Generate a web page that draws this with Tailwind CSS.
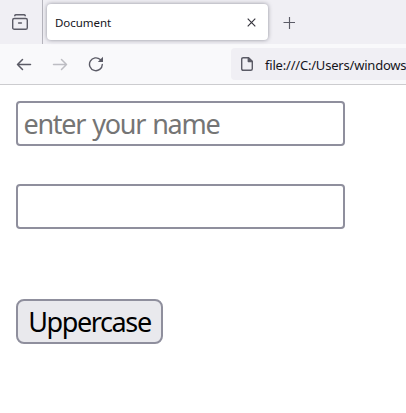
<!DOCTYPE html>
<html lang="en">
<head>
<meta charset="utf-8">
<title>Document</title>
<script src="https://cdn.jsdelivr.net/npm/@tailwindcss/browser@4"></script>
</head>
<body class="w-[406px] h-[413px] overflow-hidden bg-white text-[#15141a]">
<div class="flex h-11 bg-[#f0eff4]">
  <div class="flex w-[43px] shrink-0 border-r border-[#b5b4bc]">
    <svg class="ml-3 mt-[14px] h-4 w-4" viewBox="0 0 16 16" fill="none" stroke="#5b5b66" stroke-width="1.4" stroke-linecap="round"><path d="M2.700 1.700Q3 .8 4 .8h8q1 0 1.300.9"/><rect x=".7" y="4.500" width="14.600" height="10.800" rx="1.600"/><path d="M6.600 9h2.800"/></svg>
  </div>
  <div class="ml-1 mt-1 flex h-9 w-[221px] shrink-0 items-center justify-between rounded-[4px] bg-white pl-2 pr-3 shadow-[0_0_4px_rgba(80,80,95,0.6)]">
    <span class="mt-[2px] font-['Noto_Sans','Open_Sans',sans-serif] text-[11.5px] leading-4 tracking-[-0.03px]">Document</span>
    <svg class="h-[9px] w-[9px]" viewBox="0 0 9 9" fill="none" stroke="#35343d" stroke-width="1.15"><path d="M.7.7l7.6 7.6M8.3.7L.7 8.3"/></svg>
  </div>
  <svg class="ml-[15px] mt-[17px] h-3 w-3" viewBox="0 0 12 12" fill="none" stroke="#5b5b66" stroke-width="1.15"><path d="M.5 5.500H12M6.500 0v12"/></svg>
</div>
<div class="flex h-[41px] overflow-hidden border-b border-[#cccccf] bg-[#f9f9fb]">
  <svg class="ml-4 mt-3 h-4 w-4 shrink-0" viewBox="0 0 16 16" fill="none" stroke="#5b5b66" stroke-width="1.5" stroke-linecap="round" stroke-linejoin="round"><path d="M14.500 8.500h-13M6.500 3.500l-5 5 5 5"/></svg>
  <svg class="ml-5 mt-3 h-4 w-4 shrink-0" viewBox="0 0 16 16" fill="none" stroke="#bdbdc3" stroke-width="1.5" stroke-linecap="round" stroke-linejoin="round"><path d="M1.500 8.500h13M9.500 3.500l5 5-5 5"/></svg>
  <svg class="ml-5 mt-3 h-4 w-4 shrink-0" viewBox="0 0 16 16" fill="none" stroke="#5b5b66" stroke-width="1.400" stroke-linecap="round"><path d="M14.300 8.400a6.400 6.400 0 1 1-2-4.800"/><path d="M15 .8v5.200H9.800z" fill="#5b5b66" stroke="none"/></svg>
  <div class="ml-[127px] mt-1 flex h-8 w-[300px] shrink-0 rounded-[4px] bg-[#f0eff4] pl-[10px]">
    <svg class="mt-[9px] h-[14px] w-3 shrink-0" viewBox="0 0 12 14" fill="none" stroke="#5b5b66" stroke-width="1.400" stroke-linejoin="round"><path d="M2.200.7h5.300l3.800 3.800v7.300q0 1.500-1.500 1.500H2.200Q.7 13.300.7 11.800V2.200Q.7.7 2.200.7z"/><path d="M7.300.7v3.900h4z" fill="#5b5b66"/></svg>
    <span class="ml-3 mt-2 whitespace-nowrap font-['Noto_Sans','Open_Sans',sans-serif] text-[13px] leading-[18px] tracking-[-0.2px]">file:///C:/Users/windows</span>
  </div>
</div>
<main class="flex flex-col items-start pl-4 pt-4 font-['Noto_Sans','Open_Sans',sans-serif] text-[27px]">
  <input type="text" placeholder="enter your name" class="h-[45px] w-[329px] rounded-[4px] border-2 border-[#8f8f9d] bg-white pl-[5.5px] pr-[6px] tracking-[-1.3px] [word-spacing:1.5px] placeholder:text-[#757575]">
  <input type="text" class="mt-[38px] h-[45px] w-[329px] rounded-[4px] border-2 border-[#8f8f9d] bg-white px-[6px]">
  <button class="mt-[70px] flex h-[45px] w-[147px] items-center justify-center rounded-[8px] border-2 border-[#8f8f9d] bg-[#e9e9ed] pt-[2px] tracking-[-1.4px] text-black">Uppercase</button>
</main>
</body>
</html>
